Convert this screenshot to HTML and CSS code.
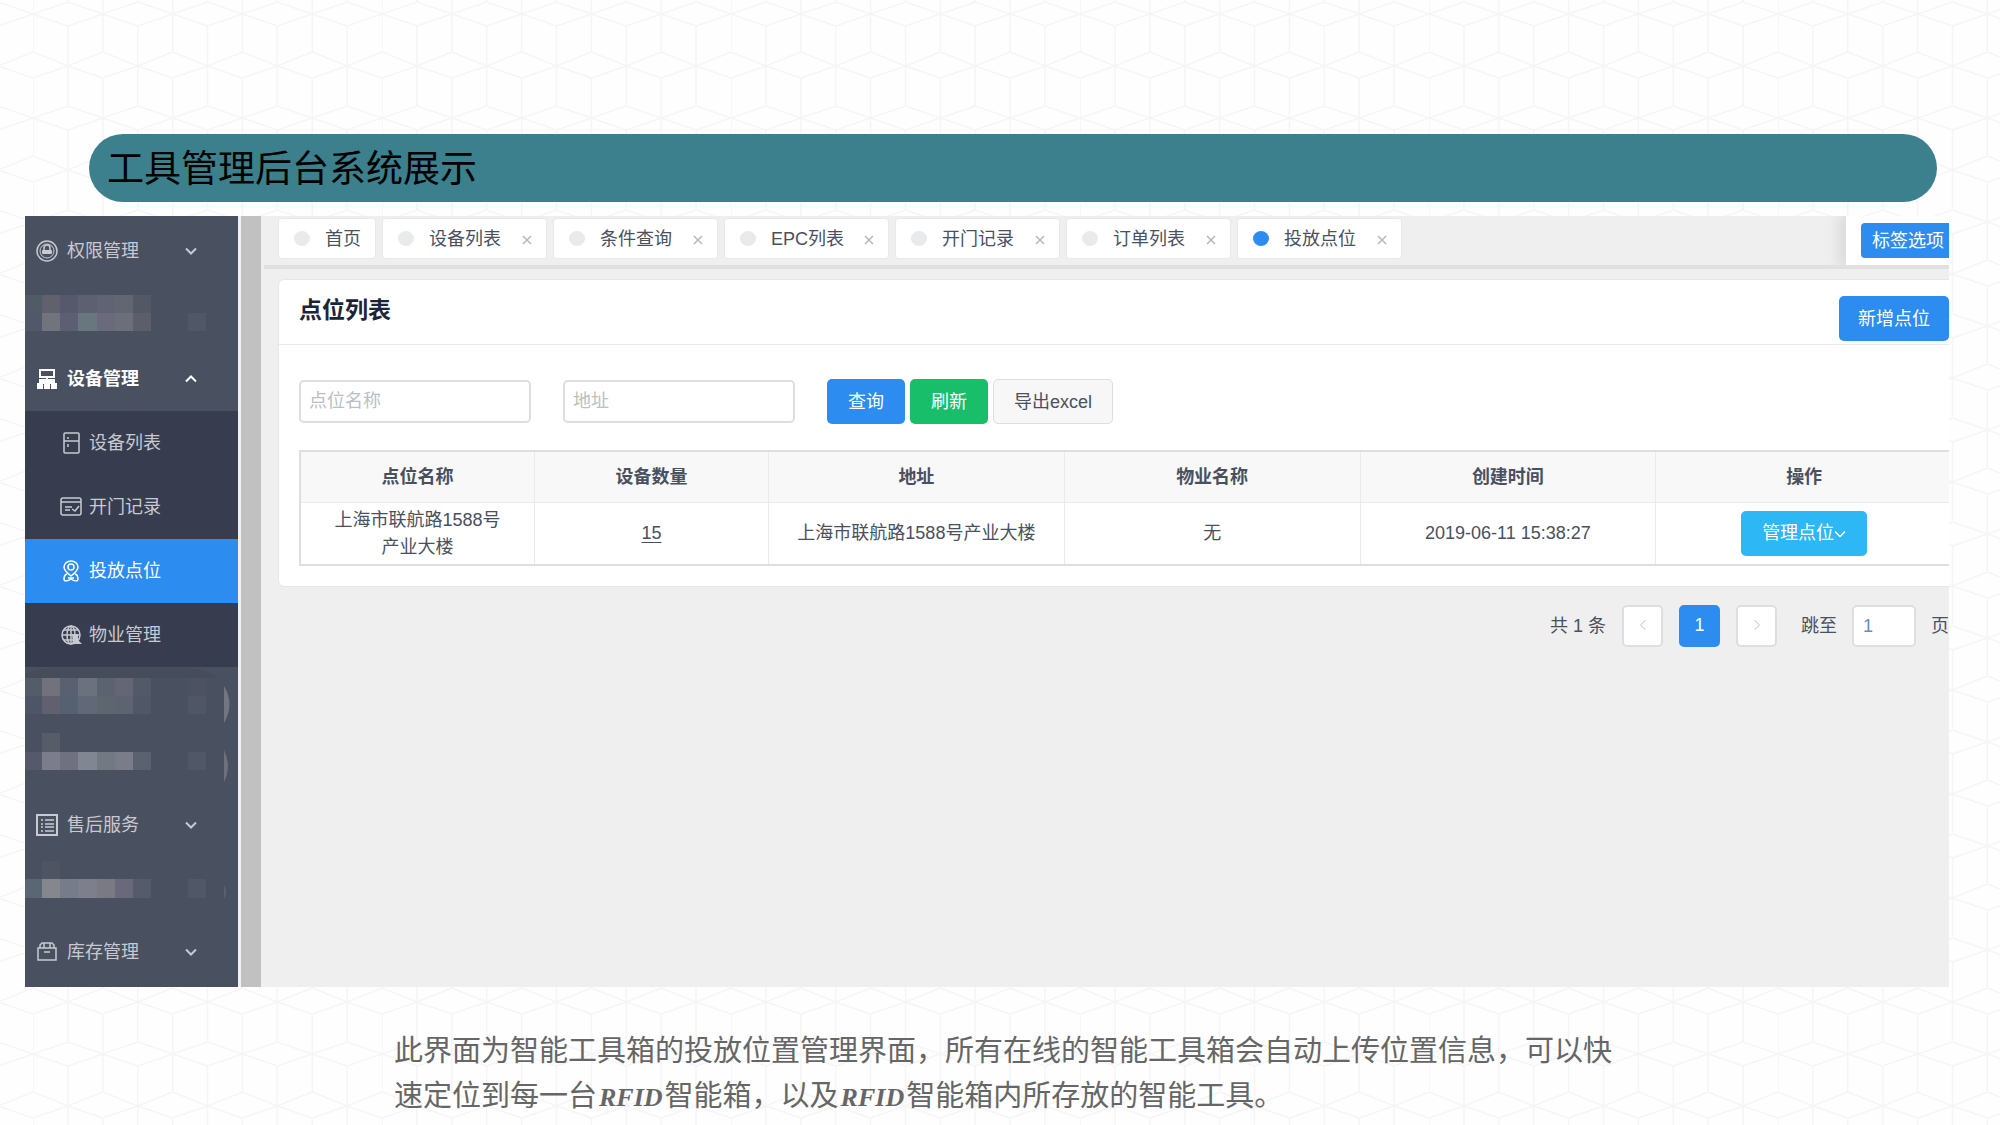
FILE: index.html
```html
<!DOCTYPE html>
<html lang="zh-CN">
<head>
<meta charset="utf-8">
<meta name="viewport" content="width=device-width, initial-scale=1">
<title>工具管理后台系统展示</title>
<link rel="stylesheet" href="styles.css">
</head>
<body>
<svg class="defs" aria-hidden="true">
  <symbol id="down" viewBox="0 0 12 8"><path d="M1 1.5 6 6.5 11 1.5"/></symbol>
  <symbol id="up" viewBox="0 0 12 8"><path d="M1 6.5 6 1.5 11 6.5"/></symbol>
  <symbol id="left" viewBox="0 0 8 12"><path d="M6.500 1 1.500 6 6.500 11"/></symbol>
  <symbol id="right" viewBox="0 0 8 12"><path d="M1.500 1 6.500 6 1.500 11"/></symbol>
  <symbol id="close" viewBox="0 0 10 10"><path d="M1 1 9 9M9 1 1 9"/></symbol>
</svg>

<h1 class="banner">工具管理后台系统展示</h1>

<main class="panel">
  <nav class="sidebar">
    <a class="item" href="#">
      <svg class="icon" viewBox="0 0 22 22"><circle cx="11" cy="11" r="10"/><circle cx="11" cy="11" r="7" stroke-width="1"/><path d="M8 10V8a3 3 0 0 1 6 0v2"/><rect class="solid" x="6" y="10" width="10" height="4" rx="1"/></svg>
      <span>权限管理</span><svg class="chev"><use href="#down"/></svg>
    </a>
    <div class="masked">
      <svg viewBox="0 0 213 64">
        <g transform="translate(0 12)">
          <path fill="#515b68" d="M0 0h17v18H0z"/><path fill="#60616c" d="M17 0h18v18H17z"/><path fill="#56596c" d="M35 0h18v18H35z"/><path fill="#5c6070" d="M53 0h19v18H53z"/><path fill="#606373" d="M72 0h18v18H72z"/><path fill="#626672" d="M90 0h18v18H90z"/><path fill="#525866" d="M108 0h18v18h-18z"/>
          <path fill="#505869" d="M0 18h17v18H0z"/><path fill="#72747d" d="M17 18h18v18H17z"/><path fill="#5c5f73" d="M35 18h18v18H35z"/><path fill="#687680" d="M53 18h19v18H53z"/><path fill="#6b6a7a" d="M72 18h18v18H72z"/><path fill="#6a6f7a" d="M90 18h18v18H90z"/><path fill="#5d5e6c" d="M108 18h18v18h-18z"/><path fill="#505766" d="M163 18h18v18h-18z"/>
        </g>
      </svg>
    </div>
    <a class="item open" href="#">
      <svg class="icon" viewBox="0 0 22 22"><path stroke-width="2" d="M4 2h14v7H4zM11 9v3"/><path class="solid" d="M3 11h16v4h2v6h-6v-5h-1v5H8v-5H7v5H1v-6h2z"/></svg>
      <span>设备管理</span><svg class="chev"><use href="#up"/></svg>
    </a>
    <div class="submenu">
      <a class="item sub" href="#">
        <svg class="icon" viewBox="0 0 22 22"><rect x="4" y="1" width="15" height="20" rx="1"/><path d="M4 9h15M8 5v2M8 12v3"/></svg>
        <span>设备列表</span>
      </a>
      <a class="item sub" href="#">
        <svg class="icon" viewBox="0 0 22 22"><rect x="1" y="2" width="20" height="17" rx="2"/><path d="M1 6h20M5 11h7M5 14h5M12 13l3 2 4-5"/></svg>
        <span>开门记录</span>
      </a>
      <a class="item sub active" href="#" aria-current="page">
        <svg class="icon" viewBox="0 0 22 22"><path d="M11 16C7 13 4 10 4 7a7 6 0 0 1 14 0c0 3-3 6-7 9z"/><circle cx="11" cy="7" r="3"/><path d="M7 14c-3 1-3 3-3 5 0 3 4 2 7 0 3 2 7 3 7 0 0-2 0-4-3-5M8 18h6"/></svg>
        <span>投放点位</span>
      </a>
      <a class="item sub" href="#">
        <svg class="icon" viewBox="0 0 22 22"><circle cx="11" cy="11" r="9"/><ellipse cx="11" cy="11" rx="4" ry="9"/><path d="M11 2v18M2 11h18M4 6h14M4 16h14"/><path class="solid" d="M12 10h6v6l4 4h-9z"/></svg>
        <span>物业管理</span>
      </a>
    </div>
    <div class="masked">
      <svg viewBox="0 0 213 64">
        <path fill="#474c5b" d="M0 8Q10 1 30 1H160Q182 2 194 11H0z"/>
        <g transform="translate(0 11)">
          <path fill="#545b69" d="M0 0h17v18H0z"/><path fill="#71727c" d="M17 0h18v18H17z"/><path fill="#5b6070" d="M35 0h18v18H35z"/><path fill="#6b727d" d="M53 0h19v18H53z"/><path fill="#5b6270" d="M72 0h18v18H72z"/><path fill="#646675" d="M90 0h18v18H90z"/><path fill="#525968" d="M108 0h18v18h-18z"/><path fill="#4d5262" d="M163 0h18v18h-18z"/>
          <path fill="#4f5569" d="M0 18h17v18H0z"/><path fill="#625f6e" d="M17 18h18v18H17z"/><path fill="#556070" d="M35 18h18v18H35z"/><path fill="#616877" d="M53 18h19v18H53z"/><path fill="#5f656f" d="M72 18h18v18H72z"/><path fill="#5e6371" d="M90 18h18v18H90z"/><path fill="#505767" d="M108 18h18v18h-18z"/><path fill="#505666" d="M163 18h18v18h-18z"/>
        </g>
        <path fill="#737681" d="M199 19q11 18 0 37z"/>
      </svg>
    </div>
    <div class="masked">
      <svg viewBox="0 0 213 64">
        <path fill="#575c69" d="M17 3h18v19H17z"/>
        <g transform="translate(0 22)">
          <path fill="#56596c" d="M0 0h17v18H0z"/><path fill="#7c7c8a" d="M17 0h18v18H17z"/><path fill="#6f7080" d="M35 0h18v18H35z"/><path fill="#808692" d="M53 0h19v18H53z"/><path fill="#727983" d="M72 0h18v18H72z"/><path fill="#7b7c89" d="M90 0h18v18H90z"/><path fill="#5a616f" d="M108 0h18v18h-18z"/><path fill="#505767" d="M163 0h18v18h-18z"/>
        </g>
        <path fill="#6d717d" d="M199 20q8 16 0 32z"/>
      </svg>
    </div>
    <a class="item" href="#">
      <svg class="icon" viewBox="0 0 22 22"><rect x="1" y="1" width="20" height="20" stroke-width="2"/><path d="M5 6h2M9 6h9M5 10h2M9 10h9M5 13h2M9 13h9M5 17h2M9 17h9"/></svg>
      <span>售后服务</span><svg class="chev"><use href="#down"/></svg>
    </a>
    <div class="masked">
      <svg viewBox="0 0 213 64">
        <path fill="#4f5463" d="M17 4h18v18H17z"/>
        <g transform="translate(0 22)">
          <path fill="#596674" d="M0 0h17v19H0z"/><path fill="#85878e" d="M17 0h18v19H17z"/><path fill="#767c8a" d="M35 0h18v19H35z"/><path fill="#7d808c" d="M53 0h19v19H53z"/><path fill="#7a7a84" d="M72 0h18v19H72z"/><path fill="#69697b" d="M90 0h18v19H90z"/><path fill="#555b6b" d="M108 0h18v19h-18z"/><path fill="#505767" d="M163 0h18v19h-18z"/>
        </g>
        <path fill="#5c6170" d="M199 28q4 7 0 14z"/>
      </svg>
    </div>
    <a class="item" href="#">
      <svg class="icon" viewBox="0 0 22 22"><path d="M2 7h18v12H2zM4 7V4l2-2h10l2 2v3M8 2v5M14 2v5M8 11h6"/></svg>
      <span>库存管理</span><svg class="chev"><use href="#down"/></svg>
    </a>
  </nav>
  <div class="scrollbar"></div>

  <section class="content">
    <div class="tabbar">
      <div class="tabs">
        <div class="tab home"><i class="dot"></i><span>首页</span></div>
        <div class="tab"><i class="dot"></i><span>设备列表</span><button class="close" aria-label="关闭"><svg><use href="#close"/></svg></button></div>
        <div class="tab"><i class="dot"></i><span>条件查询</span><button class="close" aria-label="关闭"><svg><use href="#close"/></svg></button></div>
        <div class="tab"><i class="dot"></i><span>EPC列表</span><button class="close" aria-label="关闭"><svg><use href="#close"/></svg></button></div>
        <div class="tab"><i class="dot"></i><span>开门记录</span><button class="close" aria-label="关闭"><svg><use href="#close"/></svg></button></div>
        <div class="tab"><i class="dot"></i><span>订单列表</span><button class="close" aria-label="关闭"><svg><use href="#close"/></svg></button></div>
        <div class="tab"><i class="dot on"></i><span>投放点位</span><button class="close" aria-label="关闭"><svg><use href="#close"/></svg></button></div>
      </div>
      <div class="options"><button class="btn primary small">标签选项</button></div>
    </div>

    <div class="card">
      <header class="card-head">
        <h2>点位列表</h2>
        <button class="btn primary add">新增点位</button>
      </header>
      <form class="filters">
        <input class="field" type="text" placeholder="点位名称" aria-label="点位名称">
        <input class="field" type="text" placeholder="地址" aria-label="地址">
        <div class="actions">
          <button class="btn primary" type="button">查询</button>
          <button class="btn success" type="button">刷新</button>
          <button class="btn plain" type="button">导出excel</button>
        </div>
      </form>
      <table class="grid">
        <colgroup><col class="narrow"><col class="narrow"><col><col><col><col></colgroup>
        <thead>
          <tr><th>点位名称</th><th>设备数量</th><th>地址</th><th>物业名称</th><th>创建时间</th><th>操作</th></tr>
        </thead>
        <tbody>
          <tr>
            <td>上海市联航路1588号产业大楼</td>
            <td><a href="#">15</a></td>
            <td>上海市联航路1588号产业大楼</td>
            <td>无</td>
            <td>2019-06-11 15:38:27</td>
            <td><button class="btn info">管理点位<svg class="caret"><use href="#down"/></svg></button></td>
          </tr>
        </tbody>
      </table>
    </div>

    <div class="pager">
      <span>共 1 条</span>
      <button class="page" aria-label="上一页"><svg><use href="#left"/></svg></button>
      <button class="page current">1</button>
      <button class="page" aria-label="下一页"><svg><use href="#right"/></svg></button>
      <label class="jump">跳至 <input type="text" value="1"> 页</label>
    </div>
  </section>
</main>

<p class="caption">此界面为智能工具箱的投放位置管理界面，所有在线的智能工具箱会自动上传位置信息，可以快速定位到每一台<em>RFID</em>智能箱，以及<em>RFID</em>智能箱内所存放的智能工具。</p>
</body>
</html>
```

FILE: styles.css
```css
* { box-sizing: border-box; }

body {
  margin: 0;
  padding: 134px 51px 6px 25px;
  font: 18px/24px "Liberation Sans", "Noto Sans CJK SC", sans-serif;
  color: #495060;
  background: #fefefe url("data:image/svg+xml,%3Csvg xmlns='http://www.w3.org/2000/svg' viewBox='0 0 350 104' preserveAspectRatio='none'%3E%3Cdefs%3E%3Cg id='c' fill='none' stroke='%23f5f5f5' stroke-width='1.500'%3E%3Cpath d='M0 0 35 12 70 0M0 104 35 92 70 104M0 38 35 52 70 38M0 64 35 52 70 64M0 0V38M0 64V104M35 12V92'/%3E%3C/g%3E%3C/defs%3E%3Cuse href='%23c'/%3E%3Cuse href='%23c' x='70'/%3E%3Cuse href='%23c' x='140'/%3E%3Cuse href='%23c' x='210'/%3E%3Cuse href='%23c' x='280'/%3E%3C/svg%3E") 33px 14px / 349px 104px;
}

a { color: inherit; text-decoration: none; }
button, input { font: inherit; color: inherit; margin: 0; }
button { cursor: pointer; }
svg { display: block; fill: none; stroke: currentColor; }
.defs { position: absolute; width: 0; height: 0; }

.banner {
  margin: 0 12px 14px 64px;
  padding: 3px 18px 0;
  border-radius: 34px;
  background: #3b808c;
  color: #000;
  font-size: 37px;
  font-weight: 400;
  line-height: 65px;
}

.panel {
  display: flex;
  background: #efefef;
  overflow: hidden;
}

/* Sidebar */
.sidebar {
  flex: none;
  width: 213px;
  padding: 3px 0;
  background: #495060;
  color: #c8cad0;
}
.item {
  display: flex;
  align-items: center;
  gap: 9px;
  height: 64px;
  padding: 0 41px 1px 11px;
}
.item.open { color: #fff; font-weight: 700; }
.item.sub { gap: 7px; padding-left: 35px; }
.item.active { background: #2d8cf0; color: #fff; }
.submenu { background: #373d4f; }
.icon { width: 22px; height: 22px; stroke-width: 1.5; }
.icon .solid { fill: currentColor; stroke: none; }
.chev { width: 12px; height: 8px; margin-left: auto; stroke-width: 2; }
.masked { height: 63px; }
.masked:nth-child(2) { height: 64px; }
.masked svg { width: 213px; height: 64px; stroke: none; }

.scrollbar {
  flex: none;
  width: 23px;
  border-left: 3px solid #f1f1f1;
  background: #c1c1c1;
}

/* Content */
.content { flex: 1; min-width: 0; }
.tabbar {
  display: flex;
  justify-content: space-between;
  margin-left: 3px;
  border-bottom: 4px solid #e0e0e0;
}
.tabs { display: flex; gap: 8px; padding: 3px 0 7px 15px; }
.tab {
  display: flex;
  align-items: center;
  gap: 15px;
  width: 163px;
  height: 39px;
  padding: 0 14px 0 15px;
  border-radius: 3px;
  background: #fff;
  box-shadow: 0 0 0 1px #e9e9e9;
}
.tab.home { width: 96px; }
.dot { width: 16px; height: 15px; border-radius: 50%; background: #e9eaec; }
.dot.on { background: #2d8cf0; }
.close { margin-left: auto; padding: 3px 0 0; border: 0; background: none; color: #b5b7bb; }
.close svg { width: 10px; height: 10px; stroke-width: 1.5; }
.options {
  padding: 7px 0 7px 15px;
  background: #fff;
  box-shadow: -3px 0 15px 3px rgba(0, 0, 0, .1);
  clip-path: inset(0 0 0 -24px);
}

.btn {
  height: 45px;
  padding: 0 20px;
  border: 1px solid transparent;
  border-radius: 5px;
  color: #fff;
  white-space: nowrap;
}
.btn.small { height: 35px; padding: 0 4px 0 10px; border-radius: 4px 0 0 4px; }
.btn.add { padding: 0 18px; }
.primary { background: #2d8cf0; }
.success { background: #19be6b; }
.info { display: inline-flex; align-items: center; background: #2db7f5; }
.plain { border-color: #dddee1; background: #f7f7f7; color: #495060; }
.caret { width: 12px; height: 8px; stroke-width: 1.5; }

.card {
  margin: 11px 0 0 18px;
  border-radius: 5px 0 0 5px;
  background: #fff;
  box-shadow: 0 0 0 1px #e6e6e6;
  padding-bottom: 20px;
}
.card-head {
  display: flex;
  justify-content: space-between;
  height: 65px;
  padding: 16px 0 0 20px;
  border-bottom: 1px solid #e9eaec;
}
.card-head h2 { margin: 0; color: #1c2438; font-size: 23px; line-height: 28px; }

.filters { display: flex; align-items: center; gap: 32px; padding: 34px 0 26px 20px; }
.field {
  width: 232px;
  height: 43px;
  padding: 0 8px;
  border: 2px solid #dddee1;
  border-radius: 5px;
  background: #fff;
}
.field::placeholder { color: #bbbec4; opacity: 1; }
.actions { display: flex; gap: 5px; }

/* The last column runs under the panel's right edge */
.grid {
  width: calc(100% - 17px);
  margin-left: 20px;
  table-layout: fixed;
  border-collapse: separate;
  border-spacing: 0;
  border: 2px solid #dddee1;
  border-right: 0;
  line-height: 27px;
  text-align: center;
}
.narrow { width: 234px; }
.grid th, .grid td { padding: 0 27px; border-right: 1px solid #e9eaec; }
.grid th:last-child, .grid td:last-child { border-right: 0; }
.grid th { height: 51px; background: #f8f8f9; border-bottom: 1px solid #e9eaec; }
.grid td { height: 61px; }
.grid td a { text-decoration: underline; text-underline-offset: 3px; }
.grid .btn { vertical-align: middle; }

.pager {
  display: flex;
  align-items: center;
  justify-content: flex-end;
  gap: 16px;
  margin: 19px 0 0;
  white-space: nowrap;
}
.page {
  display: flex;
  align-items: center;
  justify-content: center;
  width: 41px;
  height: 42px;
  padding: 0 0 3px;
  border: 2px solid #dddee1;
  border-radius: 5px;
  background: #fff;
  color: #bbbec4;
}
.page svg { width: 8px; height: 12px; }
.page.current { border-color: #2d8cf0; background: #2d8cf0; color: #fff; }
.jump { display: flex; align-items: center; gap: 15px; margin-left: 8px; }
.jump input {
  width: 64px;
  height: 42px;
  padding: 0 9px;
  border: 2px solid #dddee1;
  border-radius: 5px;
  background: #fff;
  color: #5c93c4;
}

.caption {
  max-width: 1240px;
  margin: 42px 0 0 369px;
  color: #666;
  font-size: 29px;
  line-height: 45px;
}
.caption em {
  margin: 0 2px;
  font: italic 700 26px/30px "Liberation Serif", serif;
}
```
